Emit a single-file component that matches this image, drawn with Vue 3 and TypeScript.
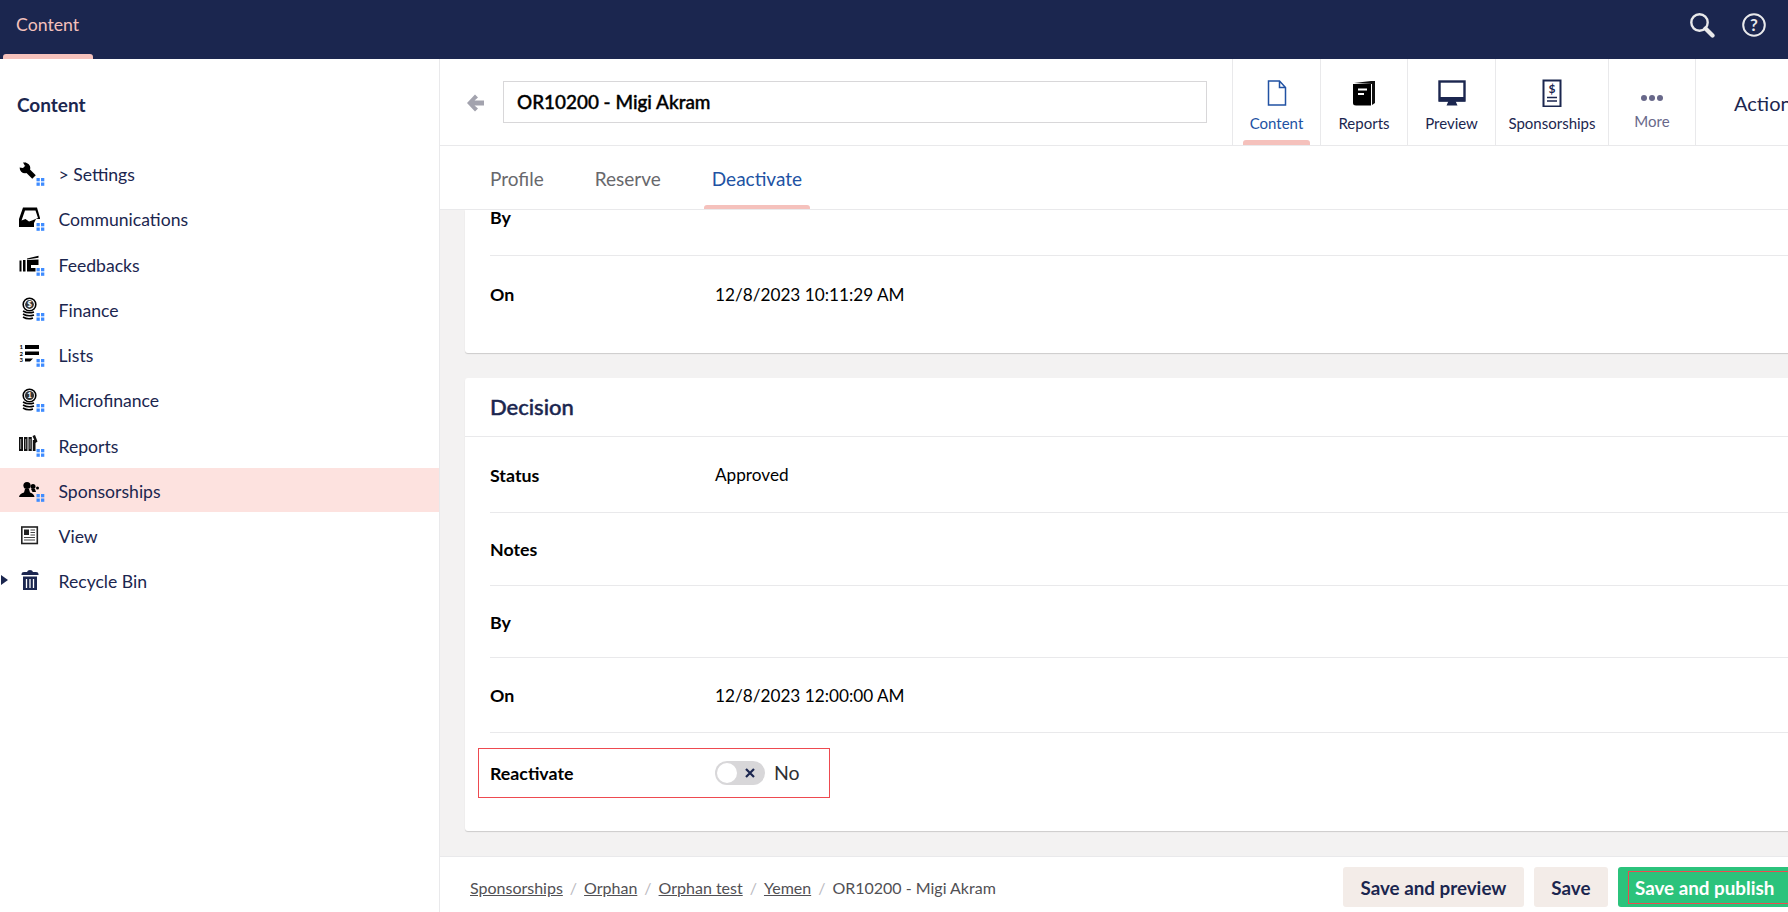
<template>
  <div class="page">
    <header class="topbar">
      <div class="section-tab">Content</div>
      <div class="topbar__tools">
        <svg width="26" height="26" viewBox="0 0 26 26">
          <circle cx="10.5" cy="10.5" r="8.2" fill="none" stroke="#e9e9eb" stroke-width="2.4" />
          <path d="M16.5 16.5 L23.5 23.5" stroke="#e9e9eb" stroke-width="4.2" stroke-linecap="round" />
        </svg>
        <svg width="26" height="26" viewBox="0 0 26 26">
          <circle cx="13" cy="13" r="10.8" fill="none" stroke="#e9e9eb" stroke-width="2" />
          <text x="13" y="19" text-anchor="middle" class="help-mark">?</text>
        </svg>
      </div>
    </header>

    <div class="body">
      <aside class="sidebar">
        <h2 class="sidebar__title">Content</h2>
        <ul class="tree">
          <li v-for="item in treeItems" :key="item.label" class="tree__row" :class="{ 'tree__row--active': item.active }">
            <span v-if="item.icon === 'bin'" class="tree__caret"></span>
            <svg class="tree__icon" width="30" height="30" viewBox="0 0 30 30">
              <g v-if="item.icon === 'wrench'">
                <path d="M9 9 L18 18" stroke="#000" stroke-width="5" />
                <circle cx="9" cy="9" r="5.300" fill="#000" />
                <path d="M3 3 L9.500 3 L10 6 L7 9 L3.500 8.500 Z" fill="#fff" />
                <path d="M7 3.600 L10 3.600 L12 6 L9 7 Z" fill="#000" />
              </g>
              <g v-if="item.icon === 'inbox'">
                <path d="M7 3.500 H21 L24 14 V23 H3 V15 Z" fill="#000" />
                <path d="M9 6.500 H19.500 L22 14 L16 16.500 L13 17.500 L9.500 15 L5.500 16.500 Z" fill="#fff" />
                <path d="M20 15 L25 15 V24 H18 V19 Z" fill="#fff" />
              </g>
              <g v-if="item.icon === 'feedback'">
                <path d="M3.500 11.500 H5.500 V22.500 H3.500 Z M7 11 H9.500 V22.500 H7 Z M11 11 L22.500 10.500 V16 H15 V19 H19.500 V22.500 H11 Z M11 9.500 L22.500 6.800 V8.800 L11 10.500 Z" fill="#000" />
              </g>
              <g v-if="item.icon === 'coins'">
                <circle cx="13.500" cy="10.500" r="6.300" fill="#fff" stroke="#000" stroke-width="1.600" />
                <circle cx="13.500" cy="10.500" r="4.400" fill="#333" />
                <text x="13.500" y="13" text-anchor="middle" class="coin-mark">$</text>
                <path d="M7 17 Q12 20 18 18 M7 20 Q12 23 18 21 M7 23 Q12 26 17 24" fill="none" stroke="#000" stroke-width="1.500" />
              </g>
              <g v-if="item.icon === 'coin-one'">
                <circle cx="13.500" cy="10.500" r="6.300" fill="#fff" stroke="#000" stroke-width="1.600" />
                <circle cx="13.500" cy="10.500" r="4.600" fill="#333" />
                <text x="13.500" y="13" text-anchor="middle" class="coin-mark">1</text>
                <path d="M7 17 Q12 20 18 18 M7 20 Q12 23 18 21 M7 23 Q12 26 17 24" fill="none" stroke="#000" stroke-width="1.500" />
              </g>
              <g v-if="item.icon === 'list'">
                <text x="3.500" y="9" class="list-mark">1</text>
                <text x="3.500" y="15.500" class="list-mark">2</text>
                <text x="3.500" y="22" class="list-mark">3</text>
                <path d="M9 5 H23 V9 H9 Z M9 11.500 H23 V15 H9 Z M9 18.500 H17 L14 21.500 H9 Z" fill="#000" />
              </g>
              <g v-if="item.icon === 'books'">
                <path d="M3 7 H7 V21 H3 Z M8 7 H11.500 V21 H8 Z M12.500 7 H15.800 V21 H12.500 Z M16.800 10 H19.500 V21 H16.800 Z M16.500 6 L19 5 L21.500 11.500 L19.500 13 Z" fill="#111" />
                <path d="M4.700 9 V19 M9.700 9 V19 M14.100 9 V19" stroke="#bbb" stroke-width="0.800" />
              </g>
              <g v-if="item.icon === 'people'">
                <circle cx="11" cy="10.500" r="3.600" fill="#000" />
                <path d="M3 22 Q3.500 18.500 8 17.500 L9 14 H13 L14 17.500 Q18 18.500 18.500 22 Z" fill="#000" />
                <circle cx="17" cy="11.500" r="2.500" fill="#000" />
                <path d="M15 14 H19 L20 17 L16.500 17 Z" fill="#000" />
                <circle cx="21.500" cy="13" r="1.500" fill="#000" />
              </g>
              <g v-if="item.icon === 'view'">
                <rect x="5.800" y="6" width="15.500" height="16.500" fill="#fff" stroke="#222" stroke-width="1.600" />
                <path d="M8 8.500 H13 V14 H8 Z" fill="#222" />
                <path d="M14.500 9 H19 M14.500 11.500 H19 M14.500 14 H19 M8 16.500 H19 M8 19 H19" stroke="#444" stroke-width="1.200" />
              </g>
              <g v-if="item.icon === 'bin'">
                <path d="M5.500 8 Q5.500 6 8 6 H11 Q11.500 4 14 4 Q16.500 4 17 6 H20 Q22.500 6 22.500 8 V9 H5.500 Z" fill="#1b264f" />
                <path d="M7 10.500 H21 V24 H7 Z" fill="#1b264f" />
                <path d="M10.500 13 V22 M14 13 V22 M17.500 13 V22" stroke="#fff" stroke-width="1.300" />
              </g>
              <g v-if="item.dots" fill="#3f8cff">
                <rect x="20.500" y="19" width="3.300" height="3.300" />
                <rect x="25" y="19" width="3.300" height="3.300" />
                <rect x="20.500" y="23.500" width="3.300" height="3.300" />
                <rect x="25" y="23.500" width="3.300" height="3.300" />
              </g>
            </svg>
            <span class="tree__label">{{ item.label }}</span>
          </li>
        </ul>
      </aside>

      <main class="editor">
        <div class="editor__head">
          <svg class="back-arrow" width="20" height="18" viewBox="0 0 20 18">
            <path d="M9 0.500 L1 9 L9 17.500 L12 14.500 L8.500 11.500 H18 V6.500 H8.500 L12 3.500 Z" fill="#a3a3ae" />
          </svg>
          <div class="name-input">OR10200 - Migi Akram</div>
          <nav class="apps">
            <a class="app app--active">
              <svg width="24" height="28" viewBox="0 0 24 28">
                <path d="M3.500 2 H14.500 L20.500 8.500 V26 H3.500 Z M14.500 2 V8.500 H20.500" fill="#fff" stroke="#2152a3" stroke-width="1.500" />
              </svg>
              <span>Content</span>
            </a>
            <a class="app">
              <svg width="26" height="28" viewBox="0 0 26 28">
                <path d="M3 4 L20 2 H24 V24 L21 26 V5 Z" fill="#111" />
                <path d="M2 5 H20 V26.500 H5 Q2 26.500 2 24 Z" fill="#000" />
                <path d="M7 10.500 H16 M7 15 H13" stroke="#fff" stroke-width="1.800" />
              </svg>
              <span>Reports</span>
            </a>
            <a class="app">
              <svg width="28" height="28" viewBox="0 0 28 28">
                <rect x="1.500" y="2.500" width="25" height="19" fill="#fff" stroke="#1b264f" stroke-width="2.400" />
                <rect x="1" y="18" width="26" height="4.500" fill="#1b264f" />
                <path d="M10.500 22 H17.500 L19.500 26.500 H8.500 Z" fill="#1b264f" />
              </svg>
              <span>Preview</span>
            </a>
            <a class="app">
              <svg width="22" height="28" viewBox="0 0 22 28">
                <rect x="2.500" y="1.500" width="17" height="26" fill="#fff" stroke="#1b264f" stroke-width="2" />
                <text x="11" y="13.500" text-anchor="middle" class="bill-mark">$</text>
                <path d="M6 18.500 H16 M6 22 H16" stroke="#1b264f" stroke-width="1.400" />
              </svg>
              <span>Sponsorships</span>
            </a>
            <a class="app app--more">
              <svg width="24" height="8" viewBox="0 0 24 8">
                <circle cx="4" cy="4" r="3" fill="#68688a" />
                <circle cx="12" cy="4" r="3" fill="#68688a" />
                <circle cx="20" cy="4" r="3" fill="#68688a" />
              </svg>
              <span>More</span>
            </a>
          </nav>
          <div class="actions-btn">Actions</div>
        </div>

        <div class="tabs">
          <a v-for="tab in tabs" :key="tab" class="tab" :class="{ 'tab--active': tab === 'Deactivate' }">{{ tab }}</a>
        </div>

        <div class="scroller">
          <section class="card card--cut">
            <div class="row row--by"><span class="row__label">By</span></div>
            <div class="row row--last"><span class="row__label">On</span><span class="row__value">12/8/2023 10:11:29 AM</span></div>
          </section>

          <section class="card">
            <h3 class="card__title">Decision</h3>
            <div v-for="row in decisionRows" :key="row.label" class="row" :style="{ height: row.height + 'px' }">
              <span class="row__label">{{ row.label }}</span>
              <span class="row__value">{{ row.value }}</span>
            </div>
            <div class="reactivate">
              <span class="row__label">Reactivate</span>
              <span class="toggle">
                <span class="toggle__knob"></span>
                <svg width="12" height="12" viewBox="0 0 12 12">
                  <path d="M2 2 L10 10 M10 2 L2 10" stroke="#1b264f" stroke-width="2.200" />
                </svg>
              </span>
              <span class="toggle-text">No</span>
            </div>
          </section>
        </div>

        <footer class="footer">
          <div class="crumbs">
            <template v-for="crumb in crumbs" :key="crumb">
              <a class="crumb">{{ crumb }}</a>
              <span class="crumb-sep">/</span>
            </template>
            <span class="crumb-current">OR10200 - Migi Akram</span>
          </div>
          <div class="buttons">
            <button class="btn">Save and preview</button>
            <button class="btn">Save</button>
            <button class="btn btn--publish"><span class="btn__mark">Save and publish</span></button>
          </div>
        </footer>
      </main>
    </div>
  </div>
</template>

<script setup lang="ts">
interface TreeItem {
  label: string
  icon: string
  dots: boolean
  active?: boolean
}

const treeItems: TreeItem[] = [
  { label: '> Settings', icon: 'wrench', dots: true },
  { label: 'Communications', icon: 'inbox', dots: true },
  { label: 'Feedbacks', icon: 'feedback', dots: true },
  { label: 'Finance', icon: 'coins', dots: true },
  { label: 'Lists', icon: 'list', dots: true },
  { label: 'Microfinance', icon: 'coin-one', dots: true },
  { label: 'Reports', icon: 'books', dots: true },
  { label: 'Sponsorships', icon: 'people', dots: true, active: true },
  { label: 'View', icon: 'view', dots: false },
  { label: 'Recycle Bin', icon: 'bin', dots: false }
]

const tabs: string[] = ['Profile', 'Reserve', 'Deactivate']

const decisionRows = [
  { label: 'Status', value: 'Approved', height: 76 },
  { label: 'Notes', value: '', height: 73 },
  { label: 'By', value: '', height: 72 },
  { label: 'On', value: '12/8/2023 12:00:00 AM', height: 75 }
]

const crumbs: string[] = ['Sponsorships', 'Orphan', 'Orphan test', 'Yemen']
</script>

<style>
html, body {
  margin: 0;
  overflow: hidden;
}
</style>

<style scoped>
.page {
  display: flex;
  flex-direction: column;
  height: 912px;
  width: 1788px;
  overflow: hidden;
  font-family: Lato, "Open Sans", sans-serif;
  color: #1b264f;
  background: #fff;
}
.topbar {
  flex: 0 0 59px;
  display: flex;
  justify-content: space-between;
  background: #1b264f;
}
.section-tab {
  position: relative;
  width: 90px;
  margin-left: 3px;
  padding: 14px 0 0 13px;
  box-sizing: border-box;
  font-size: 17.700px;
  line-height: 22px;
  color: #f5c1bc;
}
.section-tab::after {
  content: '';
  position: absolute;
  left: 0;
  right: 0;
  bottom: 0;
  height: 5px;
  border-radius: 3px 3px 0 0;
  background: #f5c1bc;
}
.topbar__tools {
  display: flex;
  gap: 26px;
  padding: 12px 21px 0 0;
}
.help-mark {
  font-size: 17px;
  font-weight: 700;
  fill: #e9e9eb;
}
.body {
  flex: 1;
  min-height: 0;
  display: flex;
}
.sidebar {
  flex: 0 0 440px;
  box-sizing: border-box;
  border-right: 1px solid #e9e9eb;
}
.sidebar__title {
  margin: 0;
  padding: 34px 0 0 17px;
  font-size: 19px;
  line-height: 24px;
  font-weight: 700;
}
.tree {
  list-style: none;
  margin: 34.500px 0 0;
  padding: 0;
  display: flex;
  flex-direction: column;
  gap: 1.250px;
}
.tree__row {
  position: relative;
  height: 44px;
  display: flex;
  align-items: center;
  padding-left: 16px;
  font-size: 17.600px;
}
.tree__row--active {
  background: #fde2df;
}
.tree__icon {
  flex: none;
  margin-right: 12.500px;
}
.tree__label {
  padding-top: 2px;
}
.tree__caret {
  position: absolute;
  left: 1px;
  top: 16px;
  border-left: 7px solid #1b264f;
  border-top: 5px solid transparent;
  border-bottom: 5px solid transparent;
}
.coin-mark {
  font-size: 8px;
  font-weight: 700;
  fill: #fff;
}
.list-mark {
  font-size: 6px;
  font-weight: 700;
  fill: #000;
}
.bill-mark {
  font-size: 12px;
  font-weight: 700;
  fill: #1b264f;
}
.editor {
  flex: 1;
  min-width: 0;
  display: flex;
  flex-direction: column;
  background: #f3f2f2;
}
.editor__head {
  flex: 0 0 87px;
  box-sizing: border-box;
  display: flex;
  align-items: flex-start;
  background: #fff;
  border-bottom: 1px solid #e9e9eb;
}
.back-arrow {
  margin: 35px 0 0 26px;
  flex: none;
}
.name-input {
  flex: none;
  box-sizing: border-box;
  width: 704px;
  height: 42px;
  margin: 22px 0 0 17px;
  padding-left: 13px;
  border: 1px solid #d8d7d9;
  font-size: 18.900px;
  font-weight: 500;
  line-height: 40px;
  color: #000;
  -webkit-text-stroke: 0.400px #000;
}
.apps {
  flex: none;
  display: flex;
  height: 86px;
  margin-left: 25px;
  border-left: 1px solid #e9e9eb;
}
.app {
  position: relative;
  box-sizing: border-box;
  display: flex;
  flex-direction: column;
  align-items: center;
  height: 86px;
  padding-top: 20px;
  border-right: 1px solid #e9e9eb;
  font-size: 15px;
  line-height: 20px;
}
.app svg {
  flex: none;
  margin-bottom: 6px;
}
.app:nth-child(1) { width: 88px; }
.app:nth-child(2) { width: 87px; }
.app:nth-child(3) { width: 88px; }
.app:nth-child(4) { width: 113px; }
.app:nth-child(5) { width: 87px; }
.app--active {
  color: #2152a3;
}
.app--active::after {
  content: '';
  position: absolute;
  left: 10px;
  right: 10px;
  bottom: 0;
  height: 5px;
  border-radius: 3px 3px 0 0;
  background: #f5c1bc;
}
.app--more {
  color: #68688a;
  padding-top: 35px;
}
.app--more svg {
  margin-bottom: 9px;
}
.actions-btn {
  flex: none;
  margin: 31px 0 0 38px;
  font-size: 20px;
  line-height: 26px;
  white-space: nowrap;
}
.tabs {
  flex: 0 0 64px;
  box-sizing: border-box;
  display: flex;
  gap: 51px;
  padding-left: 50px;
  background: #fff;
  border-bottom: 1px solid #e9e9eb;
}
.tab {
  position: relative;
  padding-top: 3px;
  font-size: 19px;
  line-height: 60px;
  color: #68686c;
}
.tab--active {
  color: #2152a3;
}
.tab--active::after {
  content: '';
  position: absolute;
  left: -8px;
  right: -8px;
  bottom: 0;
  height: 4px;
  border-radius: 3px 3px 0 0;
  background: #f5c1bc;
}
.scroller {
  flex: 1;
  min-height: 0;
  overflow: hidden;
  padding-left: 25px;
  display: flex;
  flex-direction: column;
  gap: 25px;
}
.card {
  flex: none;
  width: 1400px;
  box-sizing: border-box;
  padding-left: 25px;
  background: #fff;
  border-radius: 3px;
  box-shadow: 0 1px 1px rgba(0, 0, 0, 0.160);
  font-size: 17.200px;
  color: #000;
}
.card--cut {
  height: 143px;
  border-radius: 0 0 3px 3px;
}
.card__title {
  height: 59px;
  box-sizing: border-box;
  margin: 0 0 0 -25px;
  padding-left: 25px;
  border-bottom: 1px solid #e9e9eb;
  font-size: 22px;
  font-weight: 500;
  line-height: 58px;
  color: #1b264f;
  -webkit-text-stroke: 0.450px #1b264f;
}
.row {
  height: 74px;
  box-sizing: border-box;
  display: flex;
  align-items: center;
  border-bottom: 1px solid #e9e9eb;
}
.row--by {
  height: 46px;
  align-items: flex-start;
  line-height: 14px;
}
.row--last {
  height: 76px;
  border-bottom: 0;
}
.row__label {
  flex: none;
  width: 225px;
  font-size: 17.800px;
  font-weight: 700;
}
.reactivate {
  display: flex;
  align-items: center;
  width: 352px;
  height: 50px;
  box-sizing: border-box;
  margin: 15px 0 33px -12px;
  padding: 0 0 1px 11px;
  border: 1px solid #ee4a50;
}
.toggle {
  position: relative;
  width: 50px;
  height: 24px;
  border-radius: 12px;
  background: #d8d7d9;
  display: flex;
  align-items: center;
  justify-content: flex-end;
  padding-right: 9px;
  box-sizing: border-box;
}
.toggle__knob {
  position: absolute;
  left: 2px;
  top: 2px;
  width: 20px;
  height: 20px;
  border-radius: 50%;
  background: #fff;
}
.toggle-text {
  margin-left: 9px;
  font-size: 19.500px;
  color: #303033;
}
.footer {
  flex: 0 0 56px;
  box-sizing: border-box;
  display: flex;
  align-items: center;
  justify-content: space-between;
  background: #fff;
  border-top: 1px solid #e9e9eb;
  padding: 5px 0 0 30px;
  overflow: hidden;
}
.crumbs {
  display: flex;
  align-items: center;
  font-size: 16px;
  color: #515054;
}
.crumb {
  text-decoration: underline;
}
.crumb-sep {
  margin: 0 7px;
  color: #bbbabf;
}
.buttons {
  display: flex;
  gap: 10px;
  flex: none;
  margin-right: -12px;
}
.btn {
  height: 40px;
  padding: 0 17.500px;
  border: 0;
  border-radius: 3px;
  background: #f3ece8;
  font-family: inherit;
  font-size: 18.800px;
  font-weight: 700;
  color: #1b264f;
}
.btn--publish {
  width: 182px;
  padding: 3px 0 3px 10px;
  background: #2bc37c;
  color: #fff;
  text-align: left;
}
.btn__mark {
  display: block;
  height: 33px;
  box-sizing: border-box;
  padding-left: 6px;
  line-height: 31px;
  white-space: nowrap;
  border: 1px solid #ee4a50;
}
</style>
